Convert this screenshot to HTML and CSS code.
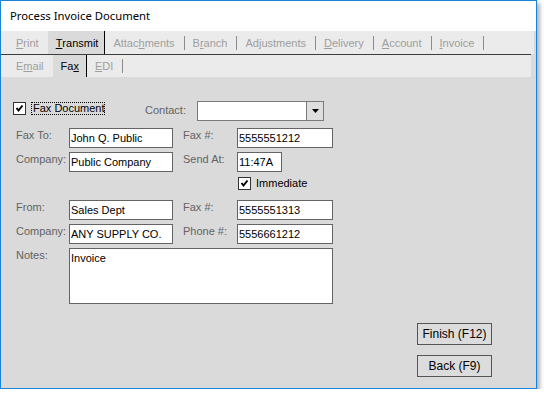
FILE: index.html
```html
<!DOCTYPE html>
<html lang="en">
<head>
    <meta charset="UTF-8">
    <title>Process Invoice Document</title>
    <link rel="stylesheet" href="styles.css">
</head>
<body>
    <div class="window">
        <div class="titlebar">Process Invoice Document</div>

        <!-- Top level tabs -->
        <div class="tabs tabs-main">
            <span class="tab"><u>P</u>rint</span>
            <span class="tab selected"><u>T</u>ransmit</span><span class="sep dark"></span>
            <span class="tab">Attac<u>h</u>ments</span><span class="sep"></span>
            <span class="tab">B<u>r</u>anch</span><span class="sep"></span>
            <span class="tab">Ad<u>j</u>ustments</span><span class="sep"></span>
            <span class="tab"><u>D</u>elivery</span><span class="sep"></span>
            <span class="tab"><u>A</u>ccount</span><span class="sep"></span>
            <span class="tab"><u>I</u>nvoice</span><span class="sep"></span>
        </div>
        <div class="tabline"></div>

        <!-- Transmit sub tabs -->
        <div class="tabs tabs-sub">
            <span class="tab">E<u>m</u>ail</span>
            <span class="tab selected">Fa<u>x</u></span><span class="sep dark"></span>
            <span class="tab"><u>E</u>DI</span><span class="sep"></span>
        </div>

        <div class="content">
            <div class="row-top">
                <span class="chk"><svg width="9" height="9" viewBox="0 0 9 9"><polyline points="1.5,4 3.5,6.5 7.5,1.5" fill="none" stroke="#000" stroke-width="2"/></svg></span>
                <span class="chk-label focus">Fax Document</span>
                <span class="lbl contact-lbl">Contact:</span>
                <div class="combo">
                    <div class="combo-text"></div>
                    <div class="combo-btn"><svg width="7" height="4" viewBox="0 0 7 4"><polygon points="0,0 7,0 3.5,4" fill="#000"/></svg></div>
                </div>
            </div>

            <div class="form">
                <span class="lbl">Fax To:</span>
                <div class="field">John Q. Public</div>
                <span class="lbl col4">Fax #:</span>
                <div class="field">5555551212</div>

                <span class="lbl">Company:</span>
                <div class="field">Public Company</div>
                <span class="lbl col4">Send At:</span>
                <div class="field short">11:47A</div>

                <div class="immediate">
                    <span class="chk"><svg width="9" height="9" viewBox="0 0 9 9"><polyline points="1.5,4 3.5,6.5 7.5,1.5" fill="none" stroke="#000" stroke-width="2"/></svg></span>
                    <span class="chk-label">Immediate</span>
                </div>

                <span class="lbl gap-top">From:</span>
                <div class="field gap-top">Sales Dept</div>
                <span class="lbl col4 gap-top">Fax #:</span>
                <div class="field gap-top">5555551313</div>

                <span class="lbl">Company:</span>
                <div class="field">ANY SUPPLY CO.</div>
                <span class="lbl col4">Phone #:</span>
                <div class="field">5556661212</div>

                <span class="lbl">Notes:</span>
                <div class="field notes">Invoice</div>
            </div>

            <div class="actions">
                <div class="btn">Finish (F12)</div>
                <div class="btn">Back (F9)</div>
            </div>
        </div>
    </div>
</body>
</html>
```

FILE: styles.css
```css
body {
    margin: 0;
    background: #ffffff;
    font-family: "Liberation Sans", Arial, sans-serif;
    font-size: 11px;
}
.window {
    box-sizing: border-box;
    width: 537px;
    height: 389px;
    border: 1px solid #1883d7;
    display: flex;
    flex-direction: column;
    background: #dadada;
    box-shadow: 3px 3px 4px rgba(0, 0, 0, 0.3);
}
.titlebar {
    height: 30px;
    line-height: 30px;
    padding-left: 9px;
    background: #ffffff;
    font-family: "Noto Sans", sans-serif;
    font-size: 11.3px;
    color: #000;
}

/* Tabs */
.tabs {
    display: flex;
    align-items: center;
    background: #ebebeb;
    color: #9e9e9e;
}
.tabs-main {
    height: 23px;
    margin-right: 2px;
    padding-left: 7px;
}
.tabs-sub {
    height: 22px;
    margin-right: 5px;
    padding-left: 7px;
}
.tabline {
    height: 1px;
    margin-right: 5px;
    background: #3c3c3c;
}
.tab {
    height: 100%;
    display: flex;
    align-items: center;
    padding: 0 9px 0 8px;
}
.tab.selected {
    background: #dadada;
    color: #000;
    padding: 0 6px 0 8px;
}
.tabs-sub .tab.selected {
    padding: 0 7px 0 8px;
}
.sep {
    width: 1px;
    height: 14px;
    background: #8c8c8c;
}
.sep.dark {
    height: 100%;
    background: #000;
}

/* Form */
.content {
    flex: 1;
    padding: 24px 0 0 12px;
}
.lbl {
    color: #636363;
    padding-top: 1px;
    white-space: nowrap;
}
.row-top {
    display: flex;
    align-items: flex-start;
    height: 20px;
}
.chk {
    box-sizing: border-box;
    width: 13px;
    height: 13px;
    margin-top: 1px;
    border: 1px solid #333;
    background: #fff;
    display: flex;
    align-items: center;
    justify-content: center;
}
.chk-label {
    color: #000;
    margin-left: 5px;
    line-height: 12px;
    white-space: nowrap;
}
.focus {
    box-sizing: border-box;
    width: 74px;
    height: 13px;
    border: 1px dotted #000;
    padding: 0 0 0 1px;
    margin-top: 1px;
    line-height: 11px;
}
.contact-lbl {
    width: 52px;
    margin-left: 40px;
    padding-top: 3px;
}
.combo {
    box-sizing: border-box;
    width: 127px;
    height: 20px;
    border: 1px solid #7a7a7a;
    background: #fff;
    display: flex;
}
.combo-text {
    flex: 1;
}
.combo-btn {
    width: 16px;
    border-left: 1px solid #7a7a7a;
    background: #dedede;
    display: flex;
    align-items: center;
    justify-content: center;
}
.form {
    display: grid;
    grid-template-columns: 53px 104px 10px 54px 96px;
    grid-auto-rows: auto;
    row-gap: 4px;
    margin: 7px 0 0 3px;
    width: 317px;
}
.form .lbl {
    grid-column: 1;
}
.form .lbl.col4 {
    grid-column: 4;
}
.field {
    box-sizing: border-box;
    height: 20px;
    border: 1px solid #646464;
    background: #fff;
    color: #000;
    padding: 3px 0 0 1px;
    white-space: nowrap;
}
.field.short {
    width: 45px;
}
.field.notes {
    grid-column: 2 / 6;
    height: 56px;
}
.immediate {
    grid-column: 5;
    display: flex;
    margin: 1px 0 0 1px;
    height: 13px;
}
.immediate .chk {
    margin-top: 0;
}
.gap-top {
    margin-top: 6px;
}
.actions {
    display: flex;
    flex-direction: column;
    gap: 10px;
    margin: 19px 0 0 404px;
}
.btn {
    box-sizing: border-box;
    width: 75px;
    height: 22px;
    border: 1px solid #555;
    background: #dcdcdc;
    color: #000;
    font-size: 12px;
    display: flex;
    align-items: center;
    justify-content: center;
}
```
